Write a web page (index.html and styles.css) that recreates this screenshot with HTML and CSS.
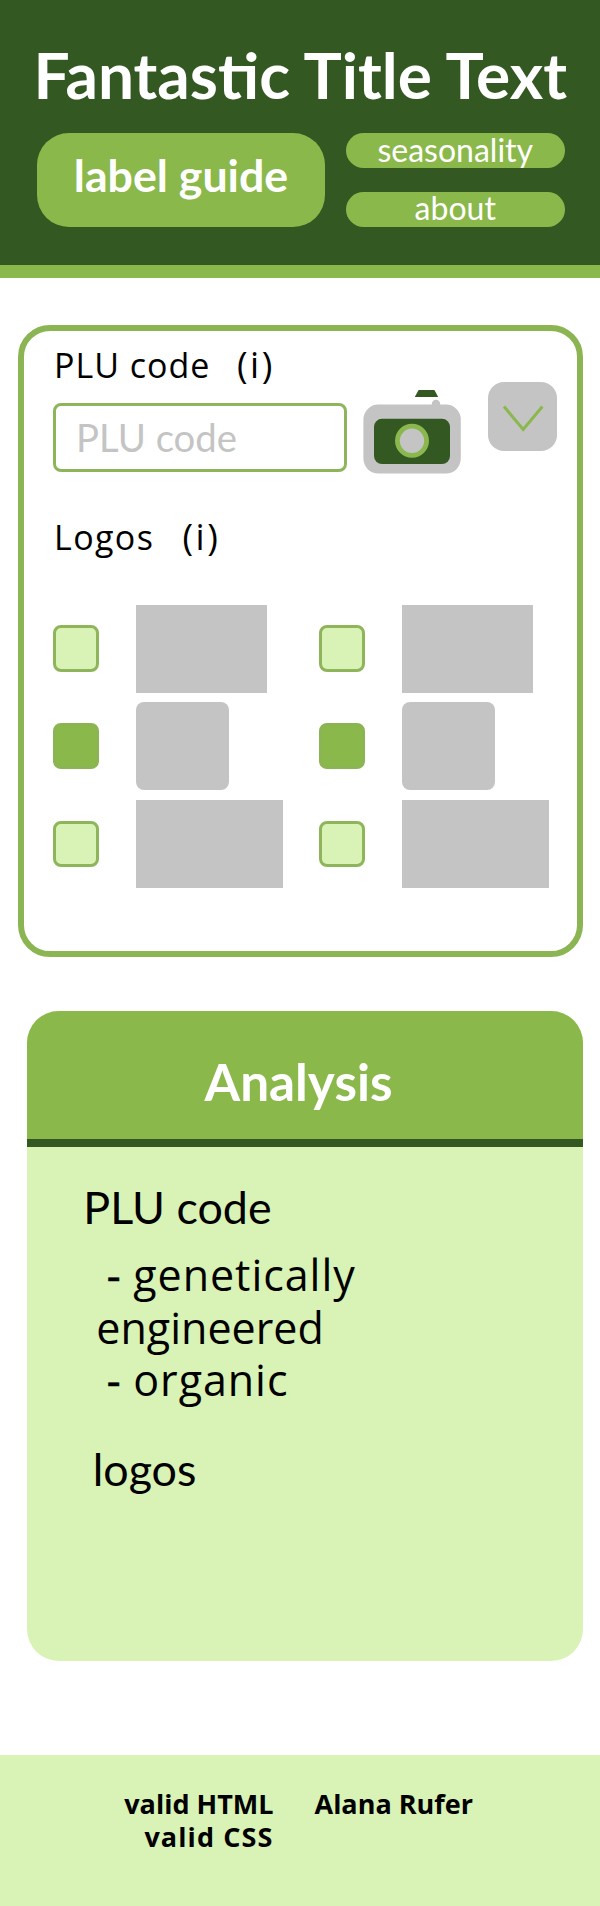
FILE: index.html
```html
<!DOCTYPE html>
<html lang="en">
<head>
<meta charset="utf-8">
<title>Fantastic Title Text</title>
<link rel="stylesheet" href="styles.css">
</head>
<body>
<header class="header">
  <h1 class="title">Fantastic Title Text</h1>
  <nav class="nav">
    <a class="nav-main"><span>label guide</span></a>
    <div class="nav-side">
      <a class="nav-link seasonality">seasonality</a>
      <a class="nav-link about">about</a>
    </div>
  </nav>
</header>
<main>
  <section class="card">
    <div class="plu">
      <div class="field">
        <div class="label"><span class="plu-label">PLU code</span><span class="info">(i)</span></div>
        <div class="input"><span>PLU code</span></div>
      </div>
      <svg class="camera" width="98" height="86" viewBox="363 388 98 86">
        <circle cx="436" cy="404" r="4.2" fill="#c4c4c4"/>
        <rect x="363.4" y="404.6" width="97.4" height="69" rx="15" fill="#c4c4c4"/>
        <path d="M418.600 390h15.800l3.800 7h-23.400z" fill="#335821"/>
        <rect x="374" y="418.800" width="76" height="45.200" rx="8" fill="#335821"/>
        <circle cx="412" cy="440.800" r="14.600" fill="#c4c4c4" stroke="#8bb84e" stroke-width="4.800"/>
      </svg>
      <svg class="drop" width="69" height="69" viewBox="0 0 69 69">
        <rect width="69" height="69" rx="16" fill="#c4c4c4"/>
        <path d="M16 24.500 35.200 47.500 54.400 24.500" fill="none" stroke="#8bb84e" stroke-width="3"/>
      </svg>
    </div>
    <div class="label logos-row"><span class="logos-label">Logos</span><span class="info">(i)</span></div>
    <div class="choices">
      <i class="check"></i><b class="logo wide"></b><i class="check"></i><b class="logo wide"></b>
      <i class="check on"></i><b class="logo square"></b><i class="check on"></i><b class="logo square"></b>
      <i class="check"></i><b class="logo widest"></b><i class="check"></i><b class="logo widest"></b>
    </div>
  </section>
  <section class="analysis">
    <h2 class="analysis-head"><span>Analysis</span></h2>
    <div class="analysis-body">
      <h3 class="sub"><span class="sub-plu">PLU code</span></h3>
      <div class="details">
        <div class="item"><span class="dash">-</span><span class="detail-spaced">genetically</span></div>
        <div><span>engineered</span></div>
        <div class="item"><span class="dash">-</span><span class="detail-spaced">organic</span></div>
      </div>
      <h3 class="sub sub-logos"><span>logos</span></h3>
    </div>
  </section>
</main>
<footer class="footer">
  <div class="valid"><div>valid HTML</div><div class="valid-css">valid CSS</div></div>
  <div class="author">Alana Rufer</div>
</footer>
</body>
</html>
```
FILE: styles.css
```css
* { box-sizing: border-box; }
body { margin: 0; width: 600px; height: 1906px; background: #fff; color: #000; font-family: "Open Sans", sans-serif; display: flex; flex-direction: column; }
h1, h2, h3 { margin: 0; white-space: nowrap; }
.header { height: 278px; background: #335821; border-bottom: 13px solid #8bb84a; padding: 36px 34px 0 37px; color: #fff; font-family: Lato, sans-serif; }
.title { font-size: 64px; line-height: 78px; font-weight: 700; margin-left: -3.500px; }
.nav { display: flex; gap: 20.500px; margin-top: 18.500px; }
.nav-main { width: 288px; height: 94.500px; border-radius: 32px; background: #8bb84a; font-size: 44.700px; font-weight: 700; display: flex; align-items: center; justify-content: center; padding-bottom: 9px; }
.nav-side { display: flex; flex-direction: column; justify-content: space-between; }
.nav-link { width: 219.500px; height: 35.500px; border-radius: 18px; background: #8bb84a; font-size: 32px; line-height: 34px; text-align: center; }
.about { line-height: 32px; }
.card { margin: 46.500px 17.300px 0 18px; height: 632.500px; border: 6px solid #8bb552; border-radius: 32px; padding: 9px 0 0 29px; }
.plu { display: flex; height: 133px; }
.field { width: 294px; flex: none; }
.label { font-size: 34px; line-height: 50px; display: flex; white-space: nowrap; letter-spacing: 1px; }
.plu-label { width: 184px; padding-left: 1px; }
.logos-label { width: 129.500px; padding-left: 1px; letter-spacing: 1.400px; }
.info { letter-spacing: 2.500px; font-size: 36px; }
.input { height: 69px; margin-top: 13px; border: 3px solid #8fb55b; border-radius: 8px; padding-left: 20px; font: 38.300px/62px Lato, sans-serif; color: #c4c4c4; }
.camera { margin: 48.500px 27px 0 16px; flex: none; }
.drop { margin-top: 42.500px; flex: none; }
.logos-row { margin-top: 39px; }
.choices { display: grid; grid-template-columns: 83px 183px 83px 150px; grid-template-rows: repeat(3, 88px); row-gap: 9.700px; align-items: center; margin-top: 43px; }
.check { width: 46px; height: 46.500px; border: 3px solid #8fb55b; border-radius: 8px; background: #d8f3b5; }
.check.on { background: #8bb84a; border-color: #8bb552; }
.logo { height: 88px; background: #c4c4c4; }
.wide { width: 131px; }
.square { width: 93px; border-radius: 8px; }
.widest { width: 147.300px; }
.analysis { width: 555.500px; height: 649.500px; margin: 54px 0 0 27.300px; border-radius: 32px; background: #d8f3b5; overflow: hidden; }
.analysis-head { height: 136px; background: #8bb84a; border-bottom: 8px solid #335821; color: #fff; font: 700 51.300px/62px Lato, sans-serif; padding: 38.500px 13px 0 0; text-align: center; }
.analysis-body { padding: 33px 0 0 56px; }
.sub { font: 400 44.800px/54px Lato, sans-serif; }
.details { font-size: 43px; line-height: 52.700px; margin-top: 15px; padding-left: 13px; }
.item { display: flex; }
.dash { width: 37px; padding-left: 10.500px; -webkit-text-stroke: 0.600px #000; }
.detail-spaced { letter-spacing: 0.950px; }
.sub-logos { margin-top: 35px; padding-left: 9.500px; }
.footer { margin-top: auto; height: 151px; background: #d8f3b5; padding: 31.500px 0 0; font-size: 27px; font-weight: 700; line-height: 33.500px; display: flex; gap: 41px; }
.valid { width: 273.500px; text-align: right; }
.valid-css { letter-spacing: 1.100px; }
```
